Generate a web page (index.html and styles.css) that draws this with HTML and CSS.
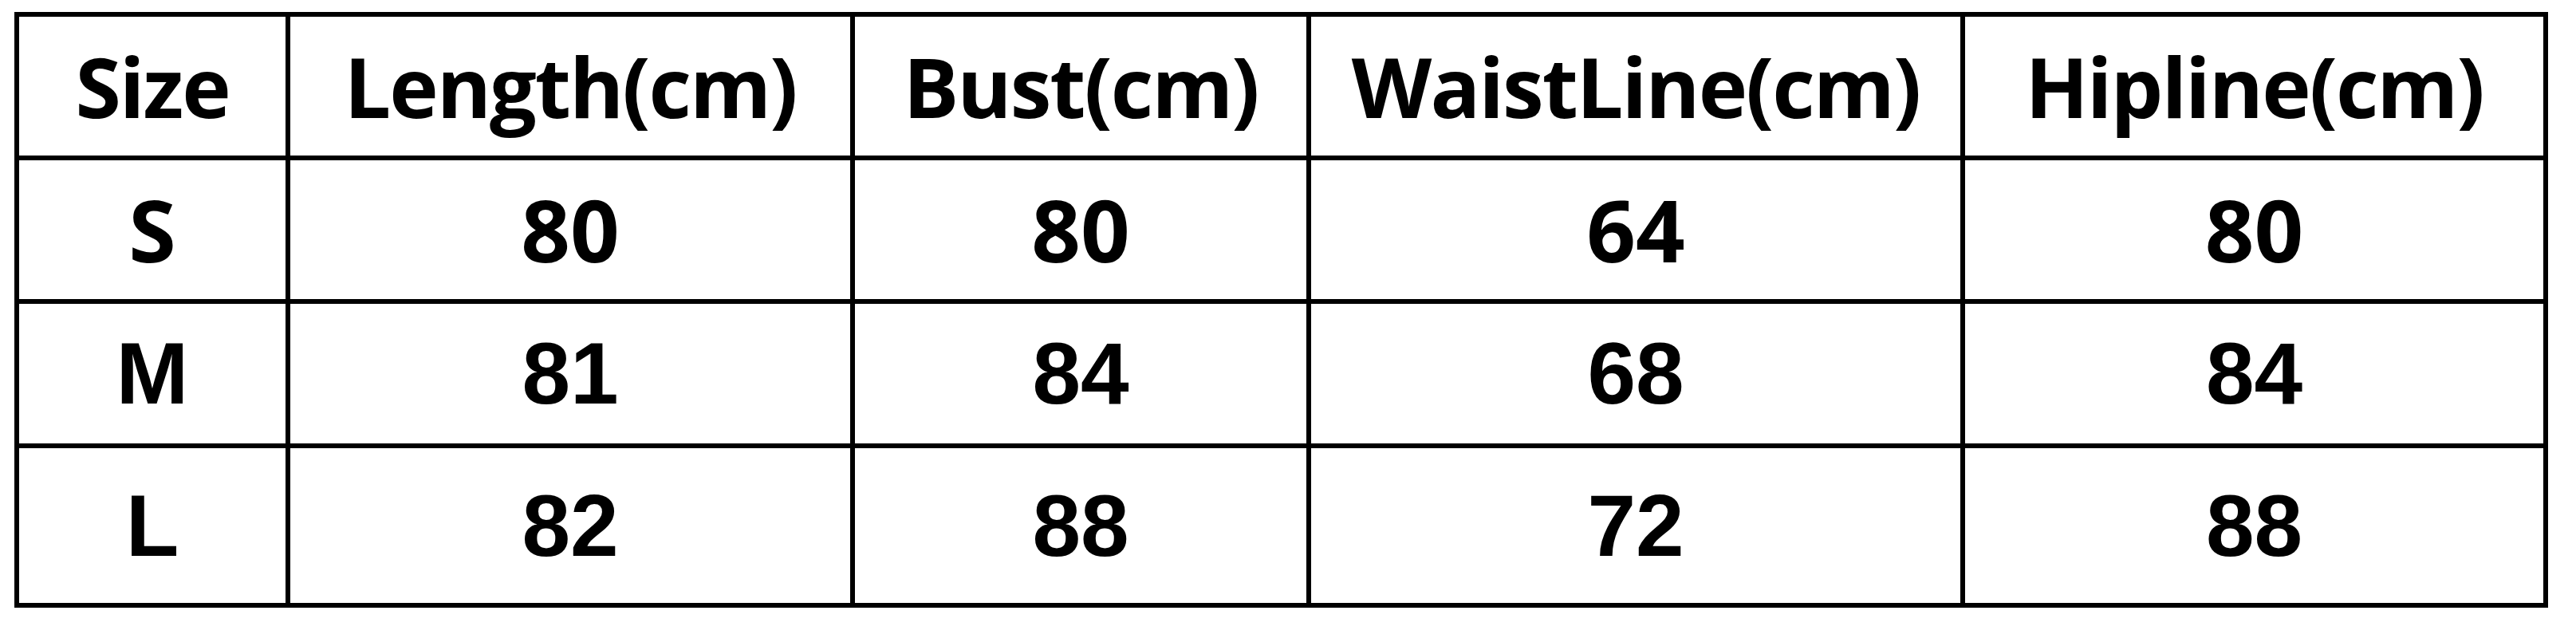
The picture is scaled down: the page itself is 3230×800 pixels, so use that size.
FILE: index.html
```html
<!DOCTYPE html>
<html lang="en">
<head>
<meta charset="utf-8">
<title>Size chart</title>
<link rel="stylesheet" href="styles.css">
</head>
<body>
<table class="size-table">
  <colgroup>
    <col class="c-size">
    <col class="c-length">
    <col class="c-bust">
    <col class="c-waist">
    <col class="c-hip">
  </colgroup>
  <thead>
    <tr class="row-head">
      <th>Size</th>
      <th>Length(cm)</th>
      <th>Bust(cm)</th>
      <th>WaistLine(cm)</th>
      <th>Hipline(cm)</th>
    </tr>
  </thead>
  <tbody>
    <tr class="row-s">
      <td>S</td><td>80</td><td>80</td><td>64</td><td>80</td>
    </tr>
    <tr class="row-m narrow">
      <td>M</td><td>81</td><td>84</td><td>68</td><td>84</td>
    </tr>
    <tr class="row-l narrow">
      <td>L</td><td>82</td><td>88</td><td>72</td><td>88</td>
    </tr>
  </tbody>
</table>
</body>
</html>
```
FILE: styles.css
```css
html, body {
  margin: 0;
  padding: 0;
  background: #ffffff;
}

.size-table {
  margin: 15px 0 0 18px;
  border-collapse: collapse;
  table-layout: fixed;
  width: 3177px;
  color: #000000;
  font-family: "Open Sans", "Noto Sans", "DejaVu Sans", sans-serif;
  font-weight: 700;
}

.c-size { width: 340px; }
.c-length { width: 708px; }
.c-bust { width: 572px; }
.c-waist { width: 820px; }
.c-hip { width: 731px; }

.size-table th,
.size-table td {
  border: 6px solid #000000;
  padding: 0;
  text-align: center;
  vertical-align: middle;
  line-height: 1;
  white-space: nowrap;
}

.row-head th {
  height: 174px;
  font-size: 104px;
  font-weight: 700;
  letter-spacing: -2px;
}

.row-s td {
  height: 174px;
  font-size: 108px;
}

.row-m td {
  height: 175px;
}

.row-l td {
  height: 194px;
}

.narrow td {
  font-family: "Liberation Sans Narrow", "Liberation Sans", Arial, sans-serif;
  font-size: 109px;
  font-weight: 700;
}
```
